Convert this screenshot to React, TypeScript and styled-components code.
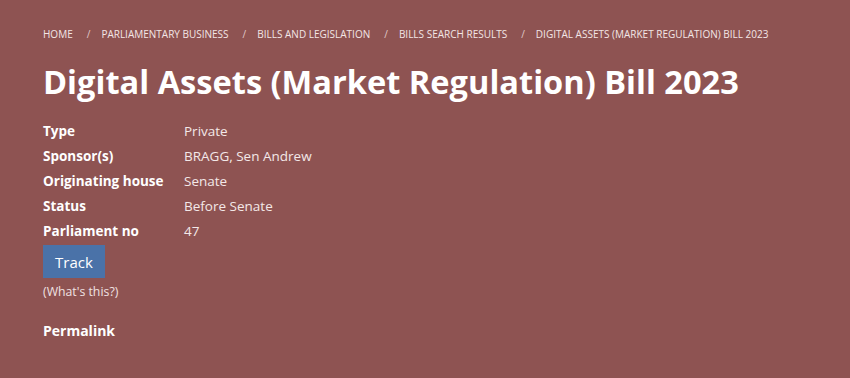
import React from "react";
import styled, { createGlobalStyle } from "styled-components";

const GlobalStyle = createGlobalStyle`
  html, body {
    margin: 0;
    padding: 0;
    background: #8e5352;
  }
  body {
    font-family: "Open Sans", "Liberation Sans", sans-serif;
    color: #fff;
  }
`;

const crumbs = [
  "Home",
  "Parliamentary Business",
  "Bills and Legislation",
  "Bills Search Results",
  "Digital Assets (Market Regulation) Bill 2023",
];

const details: [string, string][] = [
  ["Type", "Private"],
  ["Sponsor(s)", "BRAGG, Sen Andrew"],
  ["Originating house", "Senate"],
  ["Status", "Before Senate"],
  ["Parliament no", "47"],
];

const App = () => {
  return (
    <Page>
      <GlobalStyle />
      <Breadcrumb>
        {crumbs.map((c, i) => (
          <React.Fragment key={c}>
            {i > 0 && <Sep>/</Sep>}
            <Crumb>{c}</Crumb>
          </React.Fragment>
        ))}
      </Breadcrumb>
      <Title>Digital Assets (Market Regulation) Bill 2023</Title>
      <DetailList>
        {details.map(([k, v]) => (
          <React.Fragment key={k}>
            <Label>{k}</Label>
            <Value>{v}</Value>
          </React.Fragment>
        ))}
      </DetailList>
      <TrackButton>Track</TrackButton>
      <Help>(What's this?)</Help>
      <Permalink>Permalink</Permalink>
    </Page>
  );
};

const Page = styled.div`
  box-sizing: border-box;
  width: 850px;
  height: 378px;
  padding: 26px 43px 0;
  background: #8e5352;
`;
const Breadcrumb = styled.nav`
  display: flex;
  align-items: center;
  height: 16px;
  font-size: 10px;
  text-transform: uppercase;
  color: #f3e6e6;
`;
const Crumb = styled.span`
  white-space: nowrap;
`;
const Sep = styled.span`
  padding: 0 11px 0 14px;
  color: #e0c8c8;
`;
const Title = styled.h1`
  margin: 17px 0 13px;
  font-size: 32.6px;
  line-height: 46px;
  font-weight: 700;
  color: #fff;
`;
const DetailList = styled.div`
  display: grid;
  grid-template-columns: 141px auto;
  grid-auto-rows: 25px;
  align-items: center;
  font-size: 13.5px;
`;
const Label = styled.div`
  font-weight: 700;
  color: #fff;
`;
const Value = styled.div`
  color: #f3e8e8;
`;
const TrackButton = styled.button`
  display: block;
  margin-top: 2px;
  width: 62px;
  height: 33px;
  border: 0;
  background: #4a72a8;
  color: #fff;
  font-family: "Open Sans", "Liberation Sans", sans-serif;
  font-size: 15px;
  padding: 0;
`;
const Help = styled.div`
  margin-top: 5px;
  font-size: 12.3px;
  color: #f0e2e2;
`;
const Permalink = styled.div`
  margin-top: 21px;
  font-size: 14px;
  font-weight: 700;
`;

export default App;
